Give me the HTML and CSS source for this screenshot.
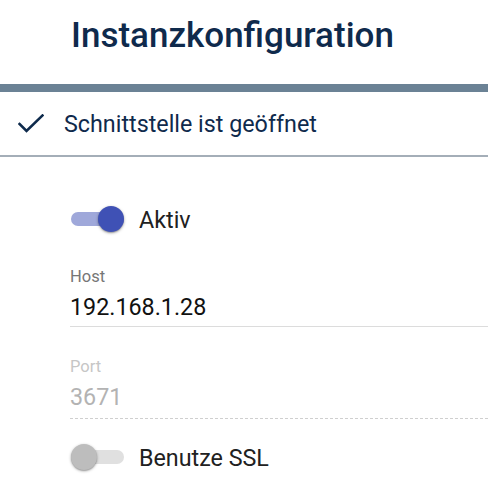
FILE: index.html
```html
<!DOCTYPE html>
<html lang="de">
<head>
<meta charset="utf-8">
<title>Instanzkonfiguration</title>
<link rel="stylesheet" href="styles.css">
</head>
<body>
<header class="header">
  <h1 class="title">Instanzkonfiguration</h1>
</header>
<div class="bar"></div>
<div class="status">
  <svg class="status-icon" width="26" height="20" viewBox="0 0 26 20" aria-hidden="true">
    <polyline points="1.5,10 8.5,17 24.5,1.5" fill="none" stroke="#0e2a4c" stroke-width="2.6" stroke-linecap="square" stroke-linejoin="miter"/>
  </svg>
  <span class="status-text">Schnittstelle ist geöffnet</span>
</div>
<form class="form">
  <label class="switch-row">
    <span class="switch switch--on"><span class="switch-track"></span><span class="switch-thumb"></span></span>
    <span class="switch-label">Aktiv</span>
  </label>
  <div class="field">
    <div class="field-label">Host</div>
    <div class="field-value">192.168.1.28</div>
  </div>
  <div class="field field--disabled">
    <div class="field-label">Port</div>
    <div class="field-value">3671</div>
  </div>
  <label class="switch-row switch-row--ssl">
    <span class="switch"><span class="switch-track"></span><span class="switch-thumb"></span></span>
    <span class="switch-label">Benutze SSL</span>
  </label>
</form>
</body>
</html>
```
FILE: styles.css
```css
html, body {
  margin: 0;
  padding: 0;
  background: #ffffff;
  overflow: hidden;
}
body {
  font-family: Roboto, "Liberation Sans", sans-serif;
  width: 488px;
  height: 500px;
}
.header {
  height: 84px;
  padding-left: 71px;
  box-sizing: border-box;
  padding-top: 16px;
}
.title {
  margin: 0;
  font-size: 35px;
  line-height: 40px;
  font-weight: 500;
  color: #0f2a4c;
  letter-spacing: 0;
}
.bar {
  height: 8px;
  background: #6b8295;
}
.status {
  height: 63px;
  display: flex;
  align-items: center;
  border-bottom: 2px solid #a4aeb8;
}
.status-icon {
  margin-left: 18px;
  margin-right: 20px;
  flex: none;
}
.status-text {
  font-size: 23.3px;
  line-height: 28px;
  color: #0f2a4c;
}
.form {
  padding-top: 43px;
  padding-left: 70px;
}
.switch-row {
  height: 40px;
  display: flex;
  align-items: center;
}
.switch {
  position: relative;
  width: 53px;
  height: 26px;
  flex: none;
  margin-right: 15px;
  margin-left: 1px;
  top: -1px;
}
.switch-track {
  position: absolute;
  left: 0;
  right: 0;
  top: 6px;
  height: 14px;
  border-radius: 7px;
  background: #e0e0e0;
}
.switch-thumb {
  position: absolute;
  left: 0;
  top: 0;
  width: 26px;
  height: 26px;
  border-radius: 50%;
  background: #bdbdbd;
  box-shadow: 0 1px 3px rgba(0, 0, 0, 0.35), 0 1px 1px rgba(0, 0, 0, 0.14);
}
.switch--on .switch-track {
  background: #9fa8da;
}
.switch--on .switch-thumb {
  left: 27px;
  background: #3f51b5;
}
.switch-label {
  font-size: 23.3px;
  line-height: 28px;
  color: #212121;
}
.field {
  margin-top: 27px;
  border-bottom: 1px solid #dcdcdc;
  padding-bottom: 5px;
}
.field-label {
  font-size: 16.5px;
  line-height: 20px;
  color: #767676;
}
.field-value {
  margin-top: 6px;
  font-size: 23.3px;
  line-height: 28px;
  color: #111111;
}
.field--disabled {
  margin-top: 30px;
  padding-bottom: 7px;
  border-bottom: 1px dashed #cfcfcf;
}
.field--disabled .field-label {
  color: #c6c6c6;
}
.field--disabled .field-value {
  color: #b3b3b3;
}
.switch-row--ssl {
  margin-top: 19px;
}
```
